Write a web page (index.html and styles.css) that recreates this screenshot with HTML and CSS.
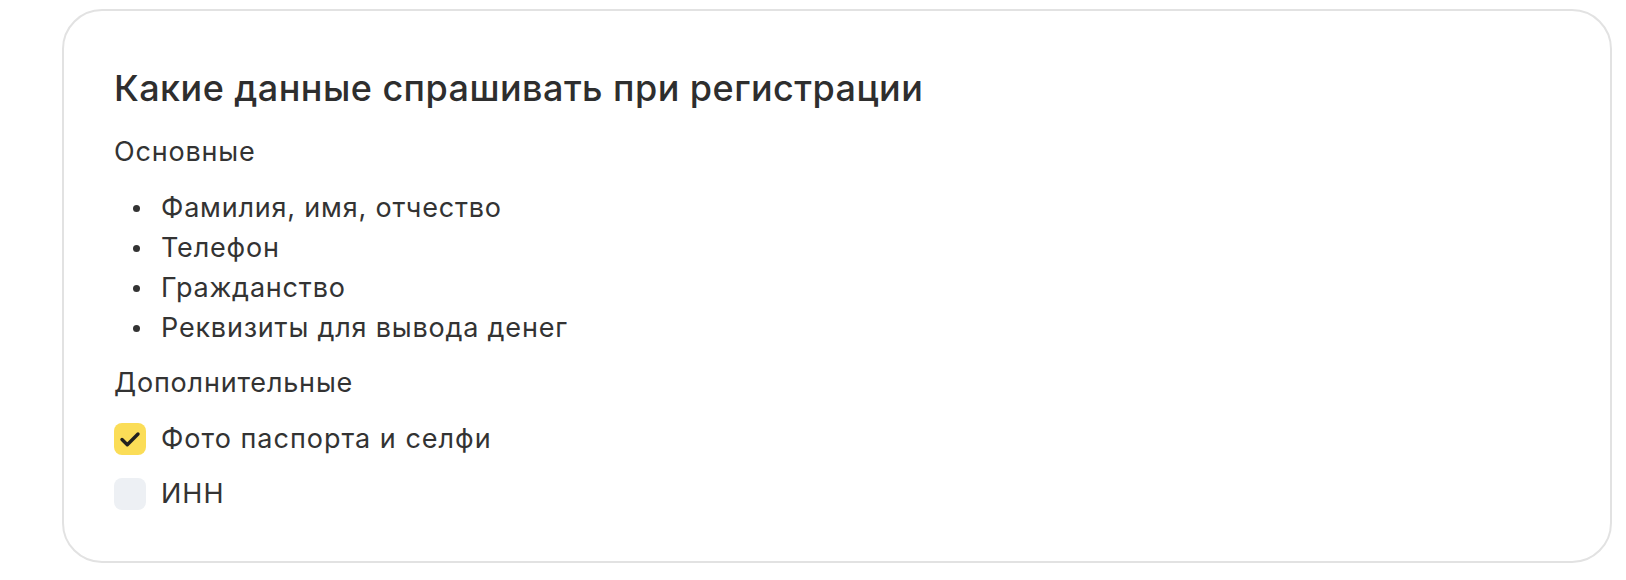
FILE: index.html
```html
<!DOCTYPE html>
<html lang="ru">
<head>
<meta charset="utf-8">
<link rel="stylesheet" href="styles.css">
</head>
<body>
<div class="card">
  <h2 class="title">Какие данные спрашивать при регистрации</h2>
  <div class="section">Основные</div>
  <ul class="list">
    <li>Фамилия, имя, отчество</li>
    <li>Телефон</li>
    <li>Гражданство</li>
    <li>Реквизиты для вывода денег</li>
  </ul>
  <div class="section">Дополнительные</div>
  <div class="checks">
    <label class="check">
      <span class="box box-on">
        <svg width="32" height="32" viewBox="0 0 32 32"><path d="M8 16.5 L13.3 21.8 L24 11" fill="none" stroke="#21201f" stroke-width="3.4" stroke-linecap="round" stroke-linejoin="round"/></svg>
      </span>
      <span class="check-text">Фото паспорта и селфи</span>
    </label>
    <label class="check">
      <span class="box box-off"></span>
      <span class="check-text">ИНН</span>
    </label>
  </div>
</div>
</body>
</html>
```
FILE: styles.css
```css
html, body {
  margin: 0;
  padding: 0;
  background: #ffffff;
}
body {
  font-family: Inter, Roboto, "Noto Sans", Arial, sans-serif;
  color: #333333;
}
.card {
  margin: 9px 14px 18px 62px;
  border: 2px solid #e2e2e2;
  border-radius: 40px;
  padding: 55px 50px 50px 50px;
  box-sizing: border-box;
  height: 554px;
}
.title {
  margin: 0;
  font-size: 36px;
  line-height: 44px;
  font-weight: 500;
  letter-spacing: 0.45px;
  color: #2e2e2e;
}
.section {
  font-size: 27px;
  line-height: 40px;
  letter-spacing: 0.8px;
  margin-top: 22px;
}
.list {
  list-style: none;
  margin: 16px 0 0 0;
  padding: 0;
}
.list li {
  font-size: 27px;
  line-height: 40px;
  letter-spacing: 0.8px;
  position: relative;
  padding-left: 47px;
}
.list li::before {
  content: "";
  position: absolute;
  left: 19px;
  top: 17px;
  width: 7px;
  height: 7px;
  border-radius: 50%;
  background: #333333;
}
.list + .section {
  margin-top: 15px;
}
.checks {
  display: flex;
  flex-direction: column;
  gap: 23px;
  margin-top: 20px;
}
.check {
  display: flex;
  align-items: center;
  gap: 15px;
  font-size: 27px;
  line-height: 32px;
  letter-spacing: 1px;
}
.box {
  width: 32px;
  height: 32px;
  border-radius: 8px;
  display: flex;
  align-items: center;
  justify-content: center;
  flex: none;
}
.box-on {
  background: #fbdd57;
}
.box-off {
  background: #edf0f4;
}
```
